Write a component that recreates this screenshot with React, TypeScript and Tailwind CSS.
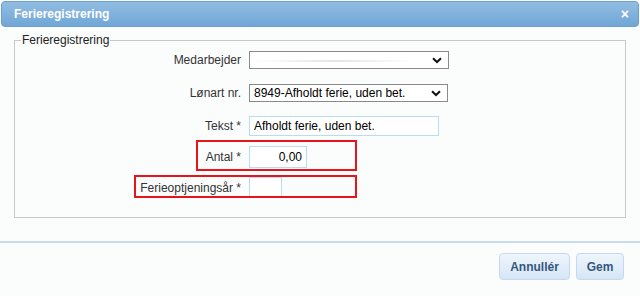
import React from 'react';

const font = { fontFamily: '"Liberation Sans", Arial, sans-serif' };

function Chevron() {
  return (
    <svg width="10" height="7" viewBox="0 0 10 7" className="shrink-0">
      <path d="M1 1.2 L5 5 L9 1.2" fill="none" stroke="#111" strokeWidth="2" />
    </svg>
  );
}

function FakeSelect({ children, width }: { children?: React.ReactNode; width: string }) {
  return (
    <div
      className={`${width} h-[18px] border border-[#8a8a8a] bg-white flex items-center pl-[4px] pr-[6px] text-[12px] text-black`}
    >
      <div className="flex-1 truncate leading-none">{children}</div>
      <Chevron />
    </div>
  );
}

function Row({ label, children, className = '' }: { label: string; children: React.ReactNode; className?: string }) {
  return (
    <div className={`flex items-center ${className}`}>
      <div className="w-[234px] text-right pr-[8px] text-[12px] text-[#333]">{label}</div>
      {children}
    </div>
  );
}

export default function App() {
  return (
    <div className="w-[640px] h-[296px] bg-[#fbfcfc] relative overflow-hidden" style={font}>
      <div className="mx-[1px] mt-[1px] h-[26px] rounded-[4px] border border-[#6a9fcf] bg-gradient-to-b from-[#92bde2] to-[#70a6d6] flex items-center justify-between pl-[12px] pr-[9px]">
        <span className="text-white font-bold text-[12px]">Ferieregistrering</span>
        <span className="text-white font-bold text-[14px] leading-none">×</span>
      </div>

      <fieldset className="relative mx-[14px] mt-[7px] h-[184px] border border-[#c9c9c9] px-0 pt-[5px]">
        <legend className="ml-[6px] px-[1px] text-[12px] text-[#222] leading-none">Ferieregistrering</legend>

        <Row label="Medarbejder">
          <FakeSelect width="w-[200px]">
            <span className="inline-block w-[160px] h-[2px] bg-gradient-to-r from-transparent via-[#e4e4e4] to-transparent align-middle" />
          </FakeSelect>
        </Row>

        <Row label="Lønart nr." className="mt-[15px]">
          <FakeSelect width="w-[199px]">8949-Afholdt ferie, uden bet.</FakeSelect>
        </Row>

        <Row label="Tekst *" className="mt-[14px]">
          <div className="w-[190px] h-[20px] border border-[#b9dcf0] bg-white flex items-center pl-[4px] text-[12px] text-black">
            Afholdt ferie, uden bet.
          </div>
        </Row>

        <Row label="Antal *" className="mt-[10px]">
          <div className="w-[58px] h-[22px] border border-[#b9dcf0] bg-white flex items-center justify-end pr-[4px] text-[12px] text-black">
            0,00
          </div>
        </Row>

        <Row label="Ferieoptjeningsår *" className="mt-[9px]">
          <div className="w-[33px] h-[21px] border border-[#b9dcf0] bg-white" />
        </Row>

        <div className="absolute left-[181px] top-[94px] w-[161px] h-[31px] border-2 border-[#e8141b]" />
        <div className="absolute left-[119px] top-[129px] w-[223px] h-[23px] border-2 border-[#e8141b]" />
      </fieldset>

      <div className="mt-[23px] h-[2px] bg-[#c8dcee]" />

      <div className="flex justify-end gap-[6px] pr-[16px] mt-[10px]">
        <button className="w-[71px] h-[27px] rounded-[4px] border border-[#c4d9ef] bg-gradient-to-b from-[#eef5fc] to-[#d6e6f6] text-[12px] font-bold text-[#35577f]">
          Annullér
        </button>
        <button className="w-[48px] h-[27px] rounded-[4px] border border-[#c4d9ef] bg-gradient-to-b from-[#eef5fc] to-[#d6e6f6] text-[12px] font-bold text-[#35577f]">
          Gem
        </button>
      </div>
    </div>
  );
}
